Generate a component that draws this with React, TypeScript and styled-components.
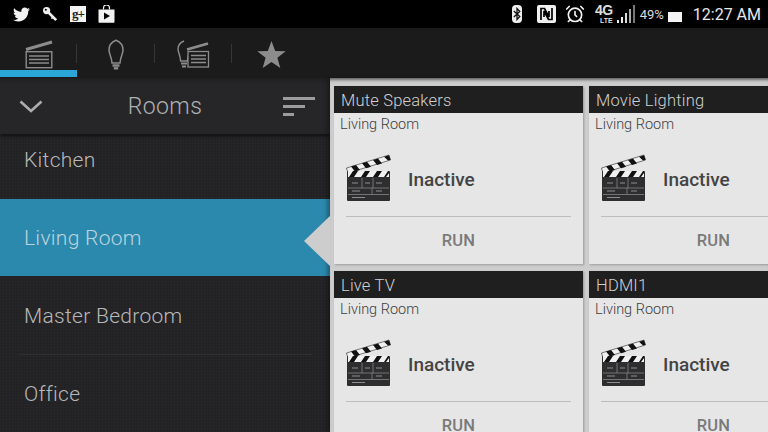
import React from 'react'
import styled, { createGlobalStyle } from 'styled-components'
import { FaTwitter } from 'react-icons/fa'
import { AlarmClock } from 'lucide-react'

const Global = createGlobalStyle`
html, body { margin: 0; padding: 0; background: #000; }
* { box-sizing: border-box; }
`

const Screen = styled.div`
  width: 768px;
  height: 432px;
  overflow: hidden;
  display: flex;
  flex-direction: column;
  font-family: Roboto, "Liberation Sans", sans-serif;
`

const StatusBar = styled.div`
  height: 28px;
  flex: none;
  background: #000;
  display: flex;
  align-items: center;
  justify-content: space-between;
  padding: 0 7px 0 13px;
  color: #f2f2f2;
`
const StatusLeft = styled.div`
  display: flex;
  align-items: center;
  gap: 12px;
`
const StatusRight = styled.div`
  display: flex;
  align-items: center;
`
const GPlus = styled.div`
  width: 16px;
  height: 16px;
  background: #f4f4f4;
  color: #222;
  font: bold 13px/14px "Liberation Serif", serif;
  letter-spacing: -1px;
  display: flex;
  align-items: center;
  justify-content: center;
`
const BluetoothPill = styled.div`
  width: 10px;
  height: 18px;
  border-radius: 4px;
  background: #eee;
  display: flex;
  align-items: center;
  justify-content: center;
`
const NfcIcon = styled.div`
  display: flex;
  margin-left: 15px;
`
const AlarmIcon = styled.div`
  display: flex;
  margin-left: 9px;
`
const Network = styled.div`
  width: 21px;
  height: 20px;
  margin-left: 7px;
  display: flex;
  flex-direction: column;
  align-items: flex-end;
  font: bold 14px/13px "Liberation Sans", sans-serif;
  color: #ddd;
  letter-spacing: -0.5px;
  small {
    font-size: 7px;
    line-height: 7px;
    letter-spacing: 0;
  }
`
const SignalIcon = styled.div`
  display: flex;
  margin-left: 4px;
`
const Percent = styled.span`
  font-size: 13px;
  color: #ddd;
  margin-left: 4px;
`
const Battery = styled.div`
  width: 14px;
  height: 10px;
  margin: 6px 0 0 4px;
  background: #f4f4f4;
`
const Clock = styled.span`
  font-size: 16px;
  color: #e8e8e8;
  margin-left: 11px;
`

const TabBar = styled.div`
  height: 50px;
  flex: none;
  background: #1b1b1c;
  display: flex;
`
const Tab = styled.div<{ $width: number; $active?: boolean }>`
  width: ${(p) => p.$width}px;
  height: 49px;
  display: flex;
  align-items: center;
  justify-content: center;
  padding-top: 11px;
  position: relative;
  border-bottom: 7px solid ${(p) => (p.$active ? '#2aa7d6' : 'transparent')};
  color: #8c8c8c;
  &::after {
    content: '';
    position: absolute;
    right: 0;
    top: 16px;
    height: 19px;
    width: 1px;
    background: #363636;
  }
`
const LastTab = styled(Tab)`
  &::after { display: none; }
`

const Body = styled.div`
  flex: 1;
  display: flex;
  min-height: 0;
`
const Sidebar = styled.div`
  width: 330px;
  flex: none;
  position: relative;
  display: flex;
  flex-direction: column;
  background-color: #222224;
  background-image:
    repeating-linear-gradient(0deg, rgba(255,255,255,.012) 0 1px, transparent 1px 3px),
    repeating-linear-gradient(90deg, rgba(255,255,255,.012) 0 1px, transparent 1px 3px);
`
const SideHeader = styled.div`
  height: 56px;
  flex: none;
  padding: 0 15px 0 19px;
  display: flex;
  align-items: center;
  justify-content: space-between;
  position: relative;
  z-index: 1;
  background: linear-gradient(#1f1f20, #262628 6px);
  box-shadow: 0 2px 3px rgba(0,0,0,.55);
`
const SideTitle = styled.div`
  font-size: 23px;
  font-weight: 300;
  color: #b0b0b0;
  letter-spacing: 0.4px;
  margin-left: 4px;
`
const RoomList = styled.div`
  margin-top: -13px;
  display: flex;
  flex-direction: column;
`
const Room = styled.div<{ $active?: boolean; $divider?: boolean }>`
  height: 78px;
  flex: none;
  padding-left: 24px;
  display: flex;
  align-items: center;
  position: relative;
  font-size: 21px;
  font-weight: 300;
  letter-spacing: 0.3px;
  border-bottom: 1px solid transparent;
  background-clip: padding-box;
  color: ${(p) => (p.$active ? '#bcd3dd' : '#b8b8b8')};
  background-color: ${(p) => (p.$active ? '#2b89ae' : 'transparent')};
  &::after {
    content: '';
    display: ${(p) => (p.$divider ? 'block' : 'none')};
    position: absolute;
    left: 18px;
    right: 18px;
    bottom: -1px;
    height: 1px;
    background: #2e2e30;
  }
`
const Pointer = styled.div`
  position: absolute;
  right: 0;
  top: 138px;
  z-index: 2;
  width: 0;
  height: 0;
  border-style: solid;
  border-width: 25px 26px 25px 0;
  border-color: transparent #cdcdcd transparent transparent;
`

const Panel = styled.div`
  flex: 1;
  position: relative;
  z-index: 1;
  background: #cdcdcd;
  padding: 8px 0 0 4px;
  overflow: hidden;
  display: grid;
  grid-template-columns: 249px 249px;
  grid-auto-rows: 178px;
  gap: 7px 6px;
  box-shadow: inset 0 4px 3px -2px rgba(0,0,0,.5), -3px 0 4px rgba(0,0,0,.3);
`
const Card = styled.div`
  background: #e6e6e6;
  box-shadow: 1px 1px 2px rgba(0,0,0,.25);
  display: flex;
  flex-direction: column;
`
const CardTitle = styled.div`
  height: 27px;
  flex: none;
  background: #1f1f20;
  color: #d0d0d0;
  font-size: 16.5px;
  font-weight: 300;
  padding: 2px 0 0 7px;
  display: flex;
  align-items: center;
  letter-spacing: 0.2px;
`
const CardRoom = styled.div`
  font-size: 14.5px;
  font-weight: 300;
  color: #3e3e3e;
  padding: 3px 0 0 6px;
  height: 40px;
  flex: none;
`
const CardStatus = styled.div`
  display: flex;
  align-items: center;
  gap: 16px;
  padding-left: 12px;
  height: 48px;
  margin-bottom: 15px;
  flex: none;
`
const StatusLabel = styled.span`
  font-size: 19px;
  font-weight: 500;
  color: #444;
  margin-top: 4px;
`
const CardDivider = styled.div`
  height: 1px;
  margin: 0 12px;
  flex: none;
  background: #bdbdbd;
`
const RunButton = styled.div`
  flex: 1;
  display: flex;
  align-items: center;
  justify-content: center;
  font-size: 16.5px;
  font-weight: 500;
  color: #7a7a7a;
  letter-spacing: 0.2px;
`

const Key = () => (
  <svg width="16" height="16" viewBox="0 0 16 16">
    <circle cx="4.6" cy="4.6" r="3.6" fill="#eee" />
    <path d="M6 6l8.200 8.200" stroke="#eee" strokeWidth="2.600" />
    <path d="M11 11l-1.600 1.600" stroke="#eee" strokeWidth="1.600" />
    <circle cx="3.800" cy="3.800" r="1" fill="#000" />
  </svg>
)

const PlayStore = () => (
  <svg width="17" height="18" viewBox="0 0 17 18">
    <path d="M5.500 4.500V3a3 3 0 016 0v1.500" stroke="#f2f2f2" strokeWidth="1.200" fill="none" />
    <path d="M0.500 4.500h16V17a.8.8 0 01-.8.8H1.300a.8.8 0 01-.8-.8z" fill="#f2f2f2" />
    <path d="M6 7.500l6 3.500-6 3.500z" fill="#000" />
  </svg>
)

const BluetoothGlyph = () => (
  <svg width="8" height="14" viewBox="0 0 8 14">
    <path d="M0.800 4l6 5.500L4 12.500V1.500L6.800 4.500 0.800 10" stroke="#111" strokeWidth="1.300" fill="none" />
  </svg>
)

const NfcMark = () => (
  <svg width="19" height="18" viewBox="0 0 19 18">
    <rect width="19" height="18" rx="2" fill="#f0f0f0" />
    <path d="M4 15V3.500h3.500L12 12V6M15 3v11.500h-3.500L7 6v6" stroke="#000" strokeWidth="1.700" fill="none" />
  </svg>
)

const Signal = () => (
  <svg width="19" height="20" viewBox="0 0 19 20">
    <rect x="0" y="16" width="2" height="3" fill="#eee" />
    <rect x="4" y="13" width="2" height="6" fill="#eee" />
    <rect x="8" y="9" width="2" height="10" fill="#ddd" />
    <rect x="12" y="5" width="2" height="14" fill="#aaa" />
    <rect x="16" y="1" width="2" height="18" fill="#777" />
  </svg>
)

const ClapperOutline = () => (
  <svg width="28" height="29" viewBox="0 0 28 29" fill="none" stroke="currentColor">
    <path d="M1 9.500L27 2" strokeWidth="3" />
    <rect x="1.200" y="11.700" width="25.600" height="16" strokeWidth="1.400" />
    <path d="M4 16h20M4 19.500h20M4 23h20" strokeWidth="1.600" />
  </svg>
)

const Bulb = () => (
  <svg width="16" height="31" viewBox="0 0 16 31" fill="none" stroke="currentColor">
    <path d="M8 1.200C3.500 3 1 7 1 11c0 4 2.600 6.500 3 13h8c.4-6.500 3-9 3-13 0-4-2.500-8-7-9.800z" strokeWidth="1.500" />
    <path d="M4.500 26.500h7" strokeWidth="2.400" />
    <path d="M5.800 29.300h4.400" strokeWidth="2.400" />
  </svg>
)

const BulbClapper = () => (
  <svg width="33" height="29" viewBox="0 0 33 29" fill="none" stroke="currentColor">
    <path d="M7 1C3.500 2.500 1 5.500 1 9c0 3.500 2.300 6 2.600 12h6.800c.2-2.500.6-4.500 1.300-6.500" strokeWidth="1.400" />
    <path d="M4 23.500h6M5 26.500h4" strokeWidth="2.200" />
    <path d="M10 9.500L31 3.500" strokeWidth="2.800" />
    <rect x="11" y="11.500" width="20.500" height="15.500" strokeWidth="1.300" fill="#1b1b1c" />
    <path d="M14 15.500h15M14 19h15M14 22.500h15" strokeWidth="1.500" />
  </svg>
)

const Star = () => (
  <svg width="29" height="27" viewBox="0 0 29 27" fill="currentColor">
    <path d="M14.500 0l3.700 9.900 10.500.4-8.300 6.500 2.900 10.200-8.800-5.900-8.800 5.900 2.900-10.200L.3 10.300l10.500-.4z" />
  </svg>
)

const Chevron = () => (
  <svg width="24" height="13" viewBox="0 0 24 13" fill="none">
    <path d="M1.500 1.500L12 11 22.500 1.500" stroke="#adadad" strokeWidth="2.600" />
  </svg>
)

const SortLines = () => (
  <svg width="32" height="20" viewBox="0 0 32 20" fill="#9c9c9c">
    <rect x="0" y="1" width="32" height="3" />
    <rect x="0" y="9" width="22" height="3" />
    <rect x="0" y="17" width="11" height="3" />
  </svg>
)

const Clapper = () => (
  <svg width="46" height="48" viewBox="0 0 46 48">
    <path d="M0.500 15L43 2l1.500 5L2 20z" fill="#f0f0f0" stroke="#222" strokeWidth="0.600" />
    <path d="M5 13.600l5-1.500 4 5-5 1.500zM16 10.300l5-1.500 4 5-5 1.500zM27 7l5-1.500 4 5-5 1.500zM38 3.700l5-1.500 1.500 4.500-2.500.8z" fill="#111" />
    <rect x="1" y="18" width="43" height="30" rx="1" fill="#2e2e30" />
    <rect x="2" y="18" width="41" height="6" fill="#f0f0f0" />
    <path d="M3 24l4-6h5l-4 6zM15 24l4-6h5l-4 6zM27 24l4-6h5l-4 6zM38 24l4-6h1v2l-3 4z" fill="#111" />
    <path d="M2 35h41M2 41.500h41M16 25v10M27 25v10M26 35v6" stroke="#868686" strokeWidth="0.800" />
    <path d="M6 30h6M19 30h5M30 30h6M6 38h8M30 38h6M6 44.500h13" stroke="#8e8e8e" strokeWidth="1.100" />
  </svg>
)

const rooms = ['Kitchen', 'Living Room', 'Master Bedroom', 'Office']
const scenes = ['Mute Speakers', 'Movie Lighting', 'Live TV', 'HDMI1']

const App = () => {
  return (
    <Screen>
      <Global />
      <StatusBar>
        <StatusLeft>
          <FaTwitter size={17} />
          <Key />
          <GPlus>g+</GPlus>
          <PlayStore />
        </StatusLeft>
        <StatusRight>
          <BluetoothPill><BluetoothGlyph /></BluetoothPill>
          <NfcIcon><NfcMark /></NfcIcon>
          <AlarmIcon><AlarmClock size={20} strokeWidth={2} /></AlarmIcon>
          <Network>4G<small>LTE</small></Network>
          <SignalIcon><Signal /></SignalIcon>
          <Percent>49%</Percent>
          <Battery />
          <Clock>12:27 AM</Clock>
        </StatusRight>
      </StatusBar>
      <TabBar>
        <Tab $width={77} $active><ClapperOutline /></Tab>
        <Tab $width={78}><Bulb /></Tab>
        <Tab $width={77}><BulbClapper /></Tab>
        <LastTab $width={78}><Star /></LastTab>
      </TabBar>
      <Body>
        <Sidebar>
          <SideHeader>
            <Chevron />
            <SideTitle>Rooms</SideTitle>
            <SortLines />
          </SideHeader>
          <RoomList>
            {rooms.map((room) => (
              <Room key={room} $active={room === 'Living Room'} $divider={room === 'Master Bedroom'}>{room}</Room>
            ))}
          </RoomList>
          <Pointer />
        </Sidebar>
        <Panel>
          {scenes.map((scene) => (
            <Card key={scene}>
              <CardTitle>{scene}</CardTitle>
              <CardRoom>Living Room</CardRoom>
              <CardStatus><Clapper /><StatusLabel>Inactive</StatusLabel></CardStatus>
              <CardDivider />
              <RunButton>RUN</RunButton>
            </Card>
          ))}
        </Panel>
      </Body>
    </Screen>
  )
}

export default App
